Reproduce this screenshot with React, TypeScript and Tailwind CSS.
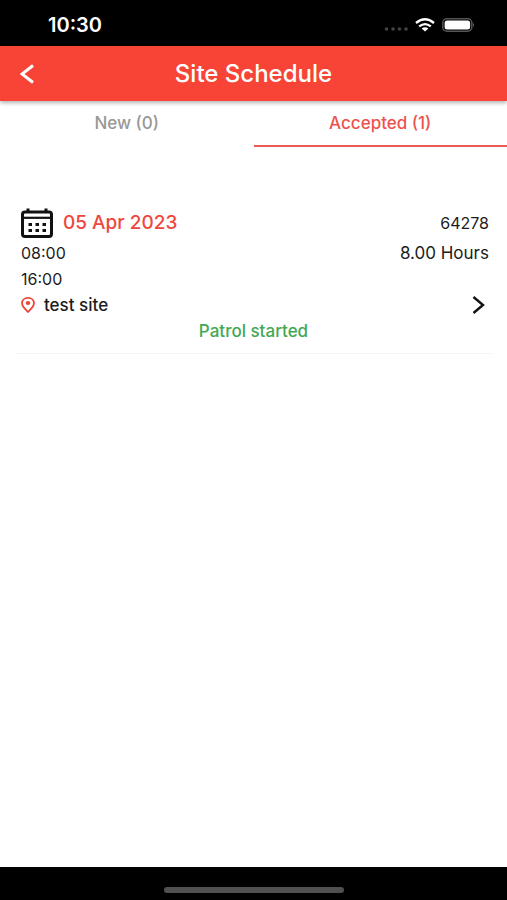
import React from "react";

function StatusBar() {
  return (
    <div className="flex h-[46px] items-center justify-between bg-black pt-1 pr-8 pl-12 text-white">
      <time className="text-[20px] leading-6 font-semibold">10:30</time>
      <div className="flex items-center gap-[7px]">
        <svg width="24" height="6" viewBox="0 0 24 6" className="mt-2" fill="#444" aria-hidden="true">
          <circle cx="2.500" cy="3" r="1.800" />
          <circle cx="9" cy="3" r="1.800" />
          <circle cx="15.500" cy="3" r="1.800" />
          <circle cx="22" cy="3" r="1.800" />
        </svg>
        <svg width="20" height="14" viewBox="0 0 20 14" fill="none" stroke="#fff" strokeWidth="2.300" aria-label="Wi-Fi" role="img">
          <path d="M1 5Q10-2.400 19 5" />
          <path d="M4.200 8.400Q10 3.800 15.800 8.400" />
          <path d="M6.600 10.600Q10 8 13.400 10.600L10 13.400Z" fill="#fff" stroke="none" />
        </svg>
        <svg width="33" height="14" viewBox="0 0 33 14" aria-label="Battery" role="img">
          <rect x="0.800" y="0.800" width="29" height="12.400" rx="4" fill="none" stroke="#555" strokeWidth="1.500" />
          <rect x="2.600" y="2.500" width="25.500" height="9" rx="2.500" fill="#fff" />
          <path d="M31 4.800Q33 7 31 9.200Z" fill="#666" />
        </svg>
      </div>
    </div>
  );
}

function CalendarIcon() {
  return (
    <svg width="32" height="30" viewBox="0 0 32 30" fill="none" aria-hidden="true">
      <rect x="1.500" y="4" width="29" height="24.500" rx="2.500" stroke="#111" strokeWidth="3" />
      <path d="M1.500 9.800H30.500" stroke="#111" strokeWidth="2.200" />
      <path d="M7 0.500V4.500M25 0.500V4.500" stroke="#111" strokeWidth="3" />
      <path
        d="M7.500 16.500H11M14.500 16.500H18M21.500 16.500H25M7.500 22.500H11M14.500 22.500H18M21.500 22.500H25"
        stroke="#111"
        strokeWidth="3"
      />
    </svg>
  );
}

function PinIcon() {
  return (
    <svg width="14" height="16" viewBox="0 0 14 16" fill="none" aria-hidden="true">
      <path
        d="M7 15C4.500 12.400 1 9.400 1 6.200C1 3.200 3.600 0.900 7 0.900C10.400 0.900 13 3.200 13 6.200C13 9.400 9.500 12.400 7 15Z"
        stroke="#f0443c"
        strokeWidth="1.800"
      />
      <ellipse cx="7" cy="6" rx="2.300" ry="2" fill="#f0443c" />
    </svg>
  );
}

export default function App() {
  return (
    <div className="flex min-h-screen flex-col bg-white font-['Inter','Liberation_Sans',sans-serif] text-[#1c1c1c]">
      <StatusBar />
      <header className="grid h-[55px] grid-cols-[1fr_auto_1fr] items-center bg-[#f84436] text-white shadow-[0_2px_4px_0_rgba(0,0,0,0.3)]">
        <button type="button" aria-label="Back" className="flex h-full w-14 items-center pl-5">
          <svg width="14" height="20" viewBox="0 0 14 20" fill="none" stroke="#fff" strokeWidth="3" aria-hidden="true">
            <path d="M13 1.500L2 10L13 18.500" />
          </svg>
        </button>
        <h1 className="text-[24px] leading-7 font-medium">Site Schedule</h1>
      </header>

      <div role="tablist" className="grid h-[46px] grid-cols-2 text-[17px] leading-5 font-medium">
        <button type="button" role="tab" aria-selected="false" className="flex items-start justify-center pt-3 text-[#989898]">
          New (0)
        </button>
        <button
          type="button"
          role="tab"
          aria-selected="true"
          className="flex items-start justify-center border-b-2 border-[#ea5a55] pt-3 text-[#ee524e]"
        >
          Accepted (1)
        </button>
      </div>

      <main className="flex-1 px-4 pt-[60px]">
        <article className="border-b border-[#f3f3f3] pb-[9px] pl-[5px] text-[17px] leading-5">
          <div className="flex h-8 items-center justify-between pr-[2px]">
            <div className="flex items-center gap-[10px]">
              <CalendarIcon />
              <h2 className="text-[19px] leading-6 font-medium text-[#ef463d]">05 Apr 2023</h2>
            </div>
            <span className="text-[16px]">64278</span>
          </div>
          <div className="mt-px flex h-[26px] items-center justify-between pr-[2px]">
            <time className="text-[16px]">08:00</time>
            <span>8.00 Hours</span>
          </div>
          <div className="flex h-[26px] items-center">
            <time className="text-[16px]">16:00</time>
          </div>
          <div className="flex h-[26px] items-center justify-between pr-[6px]">
            <div className="flex items-center gap-[9px] font-medium">
              <PinIcon />
              <span>test site</span>
            </div>
            <button type="button" aria-label="Open test site">
              <svg width="13" height="18" viewBox="0 0 13 18" fill="none" stroke="#111" strokeWidth="2.400" aria-hidden="true">
                <path d="M1.500 1L11 9L1.500 17" />
              </svg>
            </button>
          </div>
          <p className="flex h-[26px] items-center justify-center pr-[5px] font-medium text-[#43a853]">Patrol started</p>
        </article>
      </main>

      <footer className="flex h-[33px] items-end justify-center bg-black pb-[7px]">
        <div className="h-[6px] w-[180px] rounded-full bg-[#505050]" />
      </footer>
    </div>
  );
}
